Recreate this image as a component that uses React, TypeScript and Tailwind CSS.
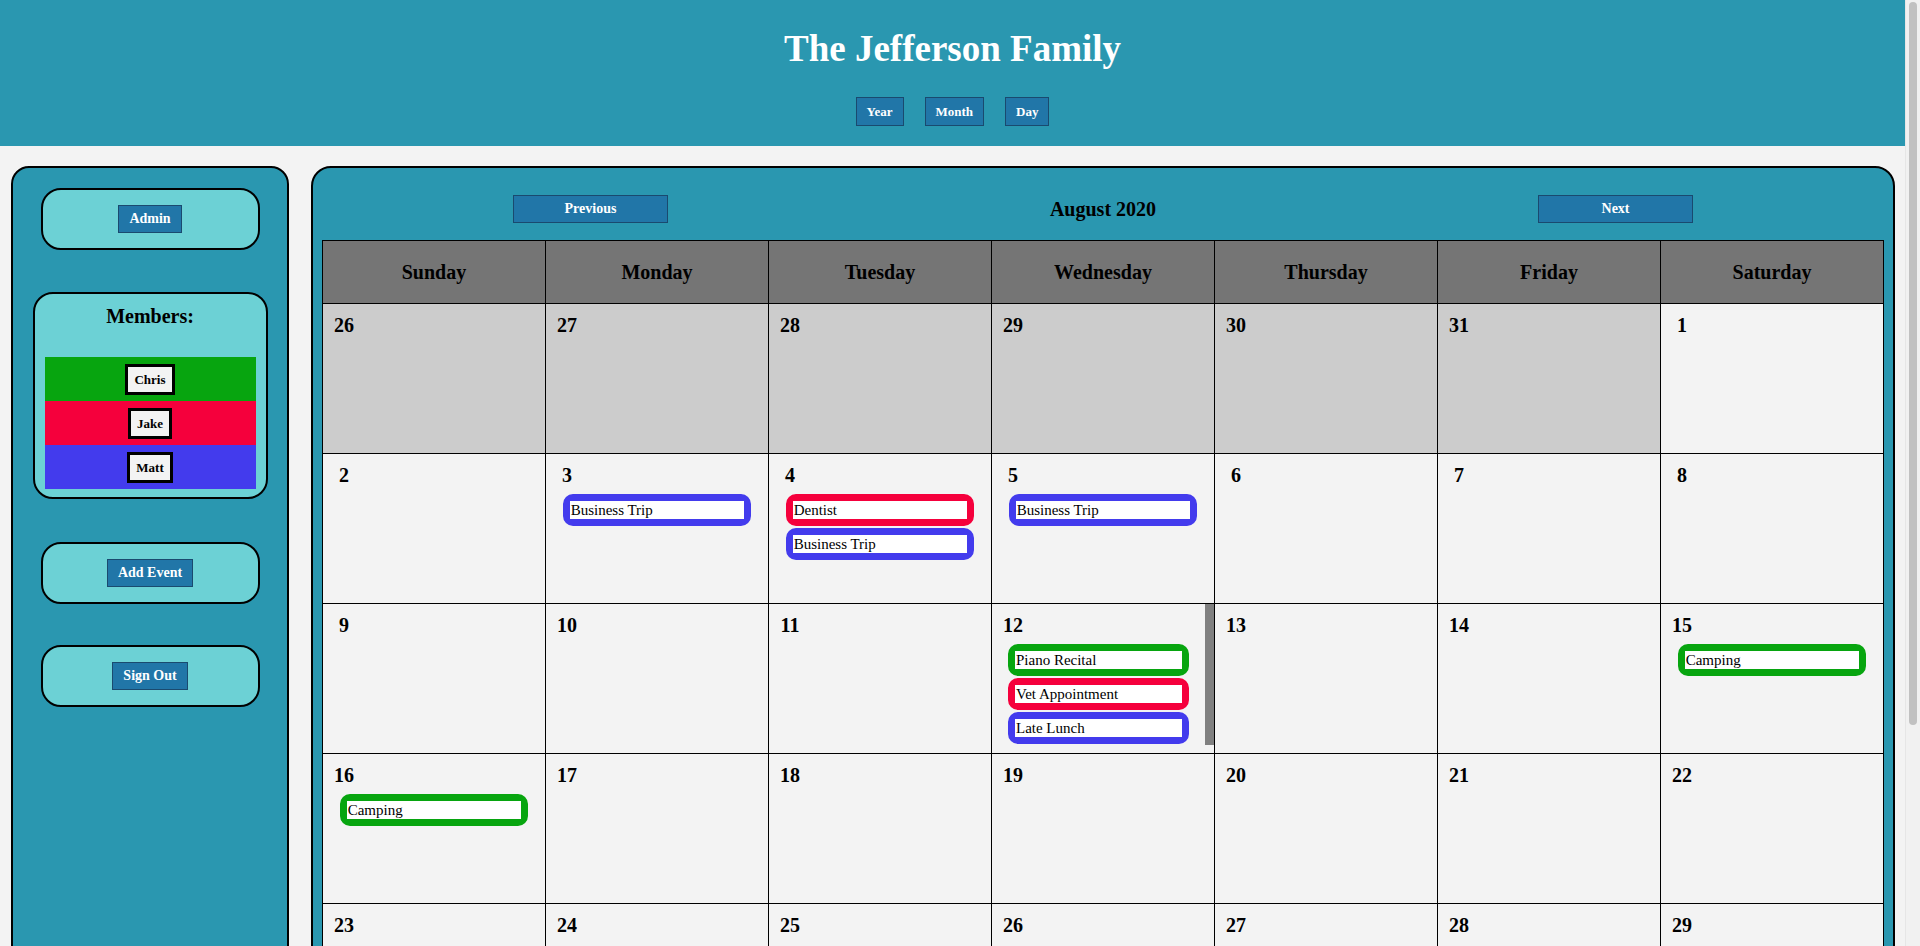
const BLUE = 'border-[#433bed]'
const RED = 'border-[#f5003c]'
const GREEN = 'border-[#07a50f]'

type Ev = { title: string; color: string }
type Day = { n: number; other?: boolean; events?: Ev[]; scroll?: boolean }

const DAYS = ['Sunday', 'Monday', 'Tuesday', 'Wednesday', 'Thursday', 'Friday', 'Saturday']

const weeks: Day[][] = [
  [26, 27, 28, 29, 30, 31].map(n => ({ n, other: true })).concat([{ n: 1 }]),
  [
    { n: 2 },
    { n: 3, events: [{ title: 'Business Trip', color: BLUE }] },
    { n: 4, events: [{ title: 'Dentist', color: RED }, { title: 'Business Trip', color: BLUE }] },
    { n: 5, events: [{ title: 'Business Trip', color: BLUE }] },
    { n: 6 },
    { n: 7 },
    { n: 8 },
  ],
  [
    { n: 9 },
    { n: 10 },
    { n: 11 },
    {
      n: 12,
      scroll: true,
      events: [
        { title: 'Piano Recital', color: GREEN },
        { title: 'Vet Appointment', color: RED },
        { title: 'Late Lunch', color: BLUE },
      ],
    },
    { n: 13 },
    { n: 14 },
    { n: 15, events: [{ title: 'Camping', color: GREEN }] },
  ],
  [
    { n: 16, events: [{ title: 'Camping', color: GREEN }] },
    { n: 17 },
    { n: 18 },
    { n: 19 },
    { n: 20 },
    { n: 21 },
    { n: 22 },
  ],
  [23, 24, 25, 26, 27, 28, 29].map(n => ({ n })),
  [{ n: 30 }, { n: 31 }].concat([1, 2, 3, 4, 5].map(n => ({ n, other: true }))),
]

const members = [
  { name: 'Chris', bg: 'bg-[#07a50f]' },
  { name: 'Jake', bg: 'bg-[#f5003c]' },
  { name: 'Matt', bg: 'bg-[#433bed]' },
]

function BlueButton({ label, className = '' }: { label: string; className?: string }) {
  return (
    <button className={`bg-[#2176a8] border border-[#1a4a6f] text-white font-bold text-[14px] leading-[20px] px-[10px] py-[3px] ${className}`}>
      {label}
    </button>
  )
}

function SideBox({ label }: { label: string }) {
  return (
    <div className="w-[219px] h-[62px] mx-auto border-2 border-black rounded-[20px] bg-[#6cd1d5] flex items-center justify-center">
      <BlueButton label={label} />
    </div>
  )
}

function DayCell({ d }: { d: Day }) {
  return (
    <div className={`h-[149px] flex ${d.other ? 'bg-[#cccccc]' : 'bg-[#f3f3f3]'}`}>
      <div className="flex-1 pt-[9px]">
        <div className="ml-[9px] w-[24px] text-center text-[20px] leading-[24px] font-bold text-black">{d.n}</div>
        <div className="mt-[7px] flex flex-col gap-[2px]">
          {(d.events || []).map((e, i) => (
            <div key={i} className={`w-[85%] mx-auto border-[7px] ${e.color} rounded-[10px]`}>
              <div className="bg-white text-[15px] leading-[18px] text-black pl-px truncate">{e.title}</div>
            </div>
          ))}
        </div>
      </div>
      {d.scroll && <div className="w-[9px] h-[141px] bg-[#808080]" />}
    </div>
  )
}

export default function App() {
  return (
    <div className="h-screen flex bg-[#f3f3f3] font-['Liberation_Serif',serif] text-black">
      <div className="flex-1 overflow-y-auto [scrollbar-width:none]">
        <header className="h-[146px] bg-[#2a97b0] flex flex-col items-center pt-[27px]">
          <h1 className="text-[37px] leading-[44px] font-bold text-white">The Jefferson Family</h1>
          <div className="mt-[26px] flex gap-[21px]">
            {['Year', 'Month', 'Day'].map(l => (
              <button key={l} className="bg-[#2176a8] border border-[#1a4a6f] text-white font-bold text-[13px] leading-[19px] px-[10px] py-[4px]">
                {l}
              </button>
            ))}
          </div>
        </header>

        <div className="flex gap-[22px] pl-[11px] pr-[10px] pt-[20px] pb-[10px]">
          {/* sidebar */}
          <aside className="w-[278px] shrink-0 border-2 border-black rounded-[18px] bg-[#2a97b0] pt-[20px]">
            <SideBox label="Admin" />

            <div className="mt-[42px] w-[235px] mx-auto border-2 border-black rounded-[20px] bg-[#6cd1d5] pt-[10px] pb-[8px] px-[10px]">
              <div className="text-center text-[20px] leading-[24px] font-bold">Members:</div>
              <div className="mt-[29px]">
                {members.map(m => (
                  <div key={m.name} className={`${m.bg} h-[44px] flex items-center justify-center`}>
                    <button className="bg-[#f3f3f3] border-[3px] border-black text-[13px] leading-[25px] font-bold px-[6px] text-black">
                      {m.name}
                    </button>
                  </div>
                ))}
              </div>
            </div>

            <div className="mt-[43px]">
              <SideBox label="Add Event" />
            </div>
            <div className="mt-[41px]">
              <SideBox label="Sign Out" />
            </div>
          </aside>

          {/* calendar */}
          <main className="flex-1 border-2 border-black rounded-[20px] bg-[#2a97b0] px-[9px] pt-[27px] pb-[12px]">
            <div className="h-[28px] mb-[17px] flex items-center justify-around">
              <BlueButton label="Previous" className="w-[155px] h-[28px]" />
              <div className="text-[20px] leading-[24px] font-bold">August 2020</div>
              <BlueButton label="Next" className="w-[155px] h-[28px]" />
            </div>

            <div className="grid grid-cols-7 gap-px bg-black border border-black">
              {DAYS.map(d => (
                <div key={d} className="h-[62px] bg-[#757575] flex items-center justify-center text-[20px] font-bold">
                  {d}
                </div>
              ))}
              {weeks.flat().map((d, i) => (
                <DayCell key={i} d={d} />
              ))}
            </div>
          </main>
        </div>
      </div>

      {/* page scrollbar */}
      <div className="w-[15px] shrink-0 bg-[#f1f1f1] border-l border-[#e6e6e6] pl-[3px] pt-[2px]">
        <div className="w-[8px] h-[723px] rounded-[4px] bg-[#c1c1c1]" />
      </div>
    </div>
  )
}
